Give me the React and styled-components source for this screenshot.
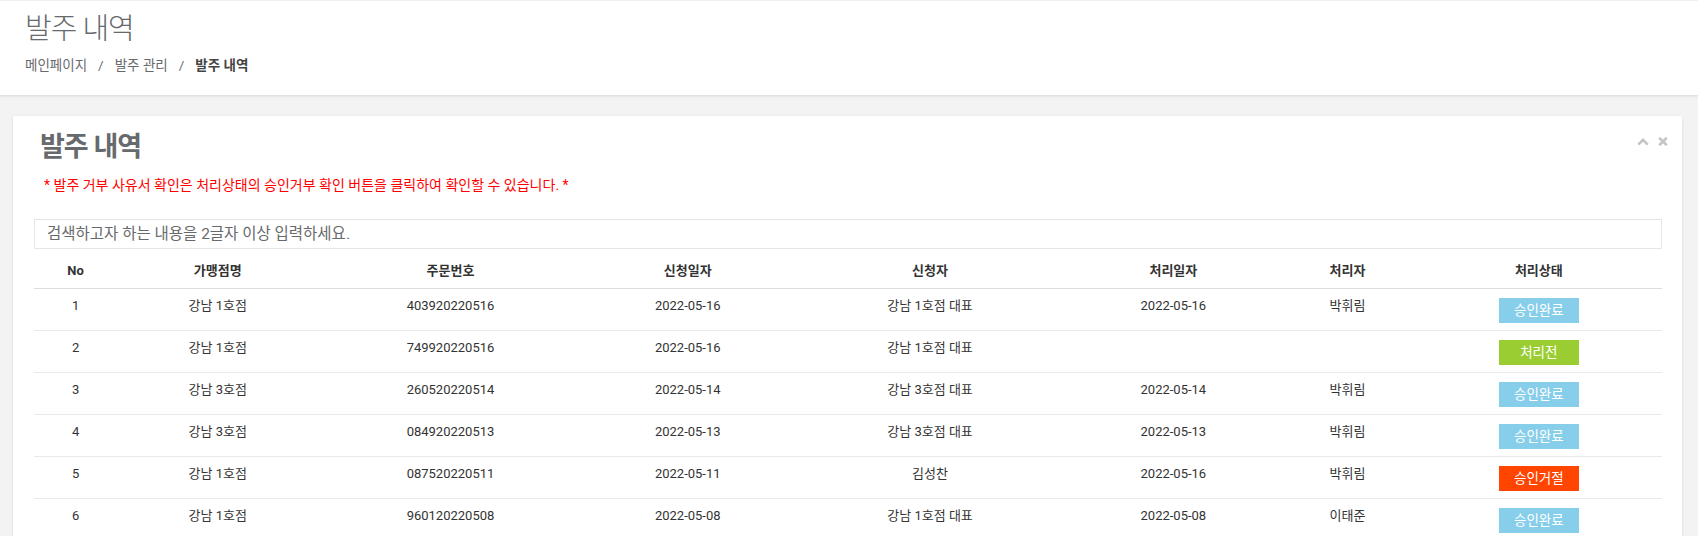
import React from 'react';
import styled, { createGlobalStyle } from 'styled-components';

const GlobalStyle = createGlobalStyle`
  html, body {
    margin: 0;
    padding: 0;
    overflow: hidden;
    background: #f3f3f4;
  }
  body {
    font-family: Roboto, "Noto Sans CJK KR", sans-serif;
    font-size: 13px;
    color: #676a6c;
  }
`;

const PageHeading = styled.header`
  background: #fff;
  border-top: 1px solid #f0f0f0;
  border-bottom: 1px solid #e2e2e2;
  box-shadow: 0 1px 2px rgba(0, 0, 0, 0.06);
  padding: 11px 25px 0;
  height: 96px;
  box-sizing: border-box;
`;

const PageTitle = styled.h2`
  margin: 0;
  font-size: 29px;
  font-weight: 300;
  letter-spacing: -1px;
  line-height: 34px;
  color: #676a6c;
`;

const Breadcrumb = styled.ol`
  display: flex;
  list-style: none;
  margin: 10px 0 0;
  padding: 0;
  line-height: 18px;
  font-size: 13.5px;
`;

const Crumb = styled.li`
  color: ${({ $active }) => ($active ? '#444' : '#676a6c')};
  font-weight: ${({ $active }) => ($active ? 'bold' : 'normal')};

  &:not(:first-child)::before {
    content: '/';
    color: #676a6c;
    font-weight: normal;
    padding: 0 11px;
  }
`;

const Card = styled.section`
  background: #fff;
  margin: 20px 16px 0 13px;
  padding: 16px 20px 0 21px;
  box-shadow: 0 1px 3px rgba(0, 0, 0, 0.12);
  border-radius: 2px;
`;

const CardHead = styled.div`
  display: flex;
  justify-content: space-between;
  align-items: flex-start;
`;

const CardTitle = styled.h3`
  margin: 0 0 0 6px;
  font-size: 27px;
  font-weight: bold;
  letter-spacing: -1px;
  line-height: 30px;
  color: #676a6c;
`;

const Tools = styled.div`
  display: flex;
  align-items: center;
  gap: 9px;
  margin: 5px -6px 0 0;
`;

const ToolButton = styled.button`
  border: none;
  background: none;
  padding: 0;
  display: flex;
  cursor: pointer;
`;

const Notice = styled.p`
  margin: 14px 0 0 10px;
  color: #ff0000;
  font-size: 14px;
  line-height: 18px;
`;

const SearchInput = styled.input`
  display: block;
  width: 100%;
  box-sizing: border-box;
  height: 30px;
  margin-top: 25px;
  padding: 0 12px;
  border: 1px solid #e5e6e7;
  font-family: inherit;
  font-size: 15.5px;
  color: #333;
  outline: none;

  &::placeholder {
    color: #676a6c;
  }
`;

const Table = styled.table`
  width: 100%;
  margin-top: 5px;
  border-collapse: collapse;
  table-layout: fixed;
`;

const Th = styled.th`
  padding: 8px;
  line-height: 18px;
  font-size: 13px;
  font-weight: bold;
  color: #333;
  text-align: center;
  border-bottom: 1px solid #dddddd;
`;

const Td = styled.td`
  padding: 8px 8px 7px;
  line-height: 18px;
  font-size: 13px;
  color: #333;
  text-align: center;
  vertical-align: top;
  border-top: 1px solid #e7eaec;
`;

const statusColors = {
  승인완료: '#87ceeb',
  처리전: '#9acd32',
  승인거절: '#ff4500',
};

const Badge = styled.span`
  display: inline-block;
  vertical-align: top;
  width: 80px;
  height: 25px;
  margin-top: 1px;
  line-height: 25px;
  color: #fff;
  font-size: 13.5px;
  background: ${({ $status }) => statusColors[$status]};
  cursor: pointer;
`;

const columns = [
  { label: 'No', width: 83 },
  { label: '가맹점명', width: 201 },
  { label: '주문번호', width: 264 },
  { label: '신청일자', width: 210 },
  { label: '신청자', width: 274 },
  { label: '처리일자', width: 212 },
  { label: '처리자', width: 136 },
  { label: '처리상태', width: 246 },
];

const orders = [
  { no: 1, store: '강남 1호점', orderNo: '403920220516', reqDate: '2022-05-16', requester: '강남 1호점 대표', doneDate: '2022-05-16', handler: '박휘림', status: '승인완료' },
  { no: 2, store: '강남 1호점', orderNo: '749920220516', reqDate: '2022-05-16', requester: '강남 1호점 대표', doneDate: '', handler: '', status: '처리전' },
  { no: 3, store: '강남 3호점', orderNo: '260520220514', reqDate: '2022-05-14', requester: '강남 3호점 대표', doneDate: '2022-05-14', handler: '박휘림', status: '승인완료' },
  { no: 4, store: '강남 3호점', orderNo: '084920220513', reqDate: '2022-05-13', requester: '강남 3호점 대표', doneDate: '2022-05-13', handler: '박휘림', status: '승인완료' },
  { no: 5, store: '강남 1호점', orderNo: '087520220511', reqDate: '2022-05-11', requester: '김성찬', doneDate: '2022-05-16', handler: '박휘림', status: '승인거절' },
  { no: 6, store: '강남 1호점', orderNo: '960120220508', reqDate: '2022-05-08', requester: '강남 1호점 대표', doneDate: '2022-05-08', handler: '이태준', status: '승인완료' },
];

function ChevronUp() {
  return (
    <svg width='12' height='9' viewBox='0 0 12 9'>
      <path d='M1.3 7.6 L6 2.8 L10.7 7.6' fill='none' stroke='#c4c4c4' strokeWidth='2.6' />
    </svg>
  );
}

function CloseIcon() {
  return (
    <svg width='10' height='9' viewBox='0 0 10 9'>
      <path d='M1.2 0.8 L8.8 8.2 M8.8 0.8 L1.2 8.2' fill='none' stroke='#c4c4c4' strokeWidth='2.6' />
    </svg>
  );
}

export default function App() {
  return (
    <>
      <GlobalStyle />
      <PageHeading>
        <PageTitle>발주 내역</PageTitle>
        <Breadcrumb>
          <Crumb>메인페이지</Crumb>
          <Crumb>발주 관리</Crumb>
          <Crumb $active>발주 내역</Crumb>
        </Breadcrumb>
      </PageHeading>

      <Card>
        <CardHead>
          <CardTitle>발주 내역</CardTitle>
          <Tools>
            <ToolButton aria-label='접기'>
              <ChevronUp />
            </ToolButton>
            <ToolButton aria-label='닫기'>
              <CloseIcon />
            </ToolButton>
          </Tools>
        </CardHead>
        <Notice>* 발주 거부 사유서 확인은 처리상태의 승인거부 확인 버튼을 클릭하여 확인할 수 있습니다. *</Notice>
        <SearchInput placeholder='검색하고자 하는 내용을 2글자 이상 입력하세요.' />
        <Table>
          <colgroup>
            {columns.map((c) => (
              <col key={c.label} style={{ width: c.width }} />
            ))}
          </colgroup>
          <thead>
            <tr>
              {columns.map((c) => (
                <Th key={c.label}>{c.label}</Th>
              ))}
            </tr>
          </thead>
          <tbody>
            {orders.map((o) => (
              <tr key={o.no}>
                <Td>{o.no}</Td>
                <Td>{o.store}</Td>
                <Td>{o.orderNo}</Td>
                <Td>{o.reqDate}</Td>
                <Td>{o.requester}</Td>
                <Td>{o.doneDate}</Td>
                <Td>{o.handler}</Td>
                <Td>
                  <Badge $status={o.status}>{o.status}</Badge>
                </Td>
              </tr>
            ))}
          </tbody>
        </Table>
      </Card>
    </>
  );
}
